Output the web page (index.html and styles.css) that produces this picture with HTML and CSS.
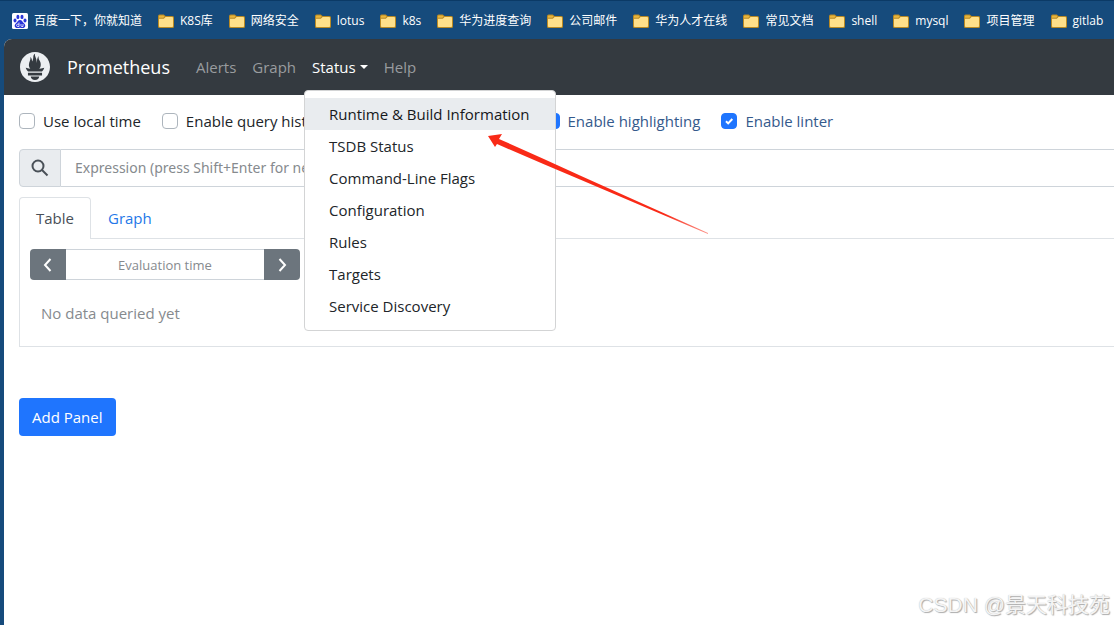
FILE: index.html
```html
<!DOCTYPE html>
<html lang="en">
<head>
<meta charset="utf-8">
<title>Prometheus Time Series Collection and Processing Server</title>
<link rel="stylesheet" href="styles.css">
</head>
<body>
<svg class="defs" aria-hidden="true">
  <symbol id="folder" viewBox="0 0 16 16">
    <path d="M0 3.2Q0 1.5 1.5 1.5h4.3L7.6 3H14.5Q16 3 16 4.500V13.500Q16 15 14.500 15h-13Q0 15 0 13.500z" fill="#b98a24"/>
    <path d="M1 3.300Q1 2.500 1.800 2.500H5.400L6.600 3.600 5.300 4.800H1z" fill="#e8b53c"/>
    <path d="M1 5.800h4.800L7.600 4H14.200Q15 4 15 4.800V13.200Q15 14 14.200 14H1.800Q1 14 1 13.200z" fill="#ffe08a"/>
  </symbol>
</svg>
<nav class="bookmarks" aria-label="Bookmarks" lang="zh">
  <a class="bookmark" href="#"><svg class="bookmark-icon" viewBox="0 0 16 16"><rect width="16" height="16" rx="1.500" fill="#fff"/><g fill="#2b35d8"><ellipse cx="3" cy="7.600" rx="1.500" ry="2"/><ellipse cx="5.900" cy="3.900" rx="1.500" ry="2.200"/><ellipse cx="10" cy="3.900" rx="1.500" ry="2.200"/><ellipse cx="13" cy="7.600" rx="1.500" ry="2"/><path d="M8 7c2 0 2.600 2.200 4.200 3.500 2 1.800 1 4.500-1.300 4.500-1.200 0-1.900-.3-2.900-.3s-1.700.3-2.900.3c-2.300 0-3.300-2.700-1.300-4.500C5.400 9.200 6 7 8 7z"/></g><path d="M7 9.500v4H5.700a1.100 1.100 0 010-2.300H7M9 11v1.800q0 .7.700.7H11V11" fill="none" stroke="#fff" stroke-width=".8"/></svg>百度一下，你就知道</a>
  <a class="bookmark" href="#"><svg class="bookmark-icon"><use href="#folder"/></svg>K8S库</a>
  <a class="bookmark" href="#"><svg class="bookmark-icon"><use href="#folder"/></svg>网络安全</a>
  <a class="bookmark" href="#"><svg class="bookmark-icon"><use href="#folder"/></svg>lotus</a>
  <a class="bookmark" href="#"><svg class="bookmark-icon"><use href="#folder"/></svg>k8s</a>
  <a class="bookmark" href="#"><svg class="bookmark-icon"><use href="#folder"/></svg>华为进度查询</a>
  <a class="bookmark" href="#"><svg class="bookmark-icon"><use href="#folder"/></svg>公司邮件</a>
  <a class="bookmark" href="#"><svg class="bookmark-icon"><use href="#folder"/></svg>华为人才在线</a>
  <a class="bookmark" href="#"><svg class="bookmark-icon"><use href="#folder"/></svg>常见文档</a>
  <a class="bookmark" href="#"><svg class="bookmark-icon"><use href="#folder"/></svg>shell</a>
  <a class="bookmark" href="#"><svg class="bookmark-icon"><use href="#folder"/></svg>mysql</a>
  <a class="bookmark" href="#"><svg class="bookmark-icon"><use href="#folder"/></svg>项目管理</a>
  <a class="bookmark" href="#"><svg class="bookmark-icon"><use href="#folder"/></svg>gitlab</a>
</nav>

<div class="page">
  <header class="navbar">
    <a class="brand" href="#">
      <svg class="logo" viewBox="0 0 24 24"><circle cx="12" cy="12" r="11" fill="#343a40"/><path fill="#eceff2" d="M12 0C5.373 0 0 5.372 0 12c0 6.627 5.373 12 12 12s12-5.373 12-12c0-6.628-5.373-12-12-12zm0 22.460c-1.885 0-3.414-1.260-3.414-2.814h6.828c0 1.553-1.528 2.813-3.414 2.813zm5.640-3.745H6.360v-2.046h11.280v2.046zm-.04-3.098H6.391c-.037-.043-.075-.086-.111-.13-1.155-1.401-1.427-2.133-1.690-2.879-.005-.025 1.400.287 2.395.511 0 0 .513.119 1.262.255-.72-.843-1.147-1.915-1.147-3.010 0-2.406 1.845-4.508 1.180-6.207.648.053 1.340 1.367 1.387 3.422.689-.951.977-2.690.977-3.755 0-1.103.727-2.385 1.454-2.429-.648 1.069.168 1.984.894 4.256.272.854.237 2.290.447 3.201.070-1.892.395-4.652 1.595-5.605-.529 1.200.079 2.702.494 3.424.671 1.164 1.078 2.047 1.078 3.716a4.642 4.642 0 01-1.110 2.996c.792-.149 1.340-.283 1.340-.283l2.573-.502s-.374 1.538-1.810 3.019z"/></svg>
      <span>Prometheus</span>
    </a>
    <nav class="nav-links" aria-label="Main">
      <a class="nav-link" href="#">Alerts</a>
      <a class="nav-link" href="#">Graph</a>
      <div class="dropdown">
        <button class="nav-link active" type="button" aria-expanded="true">Status<span class="caret"></span></button>
        <div class="dropdown-menu">
          <a class="dropdown-item highlighted" href="#">Runtime &amp; Build Information</a>
          <a class="dropdown-item" href="#">TSDB Status</a>
          <a class="dropdown-item" href="#">Command-Line Flags</a>
          <a class="dropdown-item" href="#">Configuration</a>
          <a class="dropdown-item" href="#">Rules</a>
          <a class="dropdown-item" href="#">Targets</a>
          <a class="dropdown-item" href="#">Service Discovery</a>
        </div>
      </div>
      <a class="nav-link" href="#">Help</a>
    </nav>
  </header>

  <main class="content">
    <div class="options">
      <label class="option"><input class="check" type="checkbox">Use local time</label>
      <label class="option"><input class="check" type="checkbox">Enable query history</label>
      <span class="option autocomplete"><input class="check" type="checkbox" aria-label="Enable autocomplete" checked></span>
      <label class="option on"><input class="check" type="checkbox" checked>Enable highlighting</label>
      <label class="option on"><input class="check" type="checkbox" checked>Enable linter</label>
    </div>

    <div class="expression">
      <span class="search"><svg class="search-icon" viewBox="0 0 18 18"><circle cx="7" cy="7" r="5.500"/><path d="M11 11l5.500 5.500"/></svg></span>
      <input class="expression-input" type="text" aria-label="Expression" placeholder="Expression (press Shift+Enter for newlines)">
    </div>

    <div class="tabs" role="tablist">
      <button class="tab selected" type="button" role="tab" aria-selected="true">Table</button>
      <button class="tab" type="button" role="tab" aria-selected="false">Graph</button>
    </div>
    <section class="panel">
      <div class="time-control">
        <button class="step" type="button" aria-label="Earlier"><svg class="chevron" viewBox="0 0 16 16"><path d="M10.500 2L5 8l5.500 6"/></svg></button>
        <input class="time-input" type="text" aria-label="Evaluation time" placeholder="Evaluation time">
        <button class="step last" type="button" aria-label="Later"><svg class="chevron" viewBox="0 0 16 16"><path d="M5.500 2L11 8l-5.500 6"/></svg></button>
      </div>
      <p class="empty">No data queried yet</p>
    </section>

    <button class="add-panel" type="button">Add Panel</button>
  </main>
</div>

<svg class="arrow" viewBox="0 0 220 100" aria-hidden="true">
  <linearGradient id="arrow-fade"><stop offset=".8" stop-color="#f92a17"/><stop offset="1" stop-color="#f92a17" stop-opacity=".5"/></linearGradient>
  <path d="M0 0L14 -2 11 3Q52 21 92 39.500L220 97 220 98 92 43.500Q50 26 9 8L7 11Z" fill="url(#arrow-fade)"/>
</svg>
<div class="watermark" lang="zh">CSDN @景天科技苑</div>
</body>
</html>
```

FILE: styles.css
```css
* { box-sizing: border-box; }

body {
  margin: 0;
  min-height: 100vh;
  display: flex;
  flex-direction: column;
  position: relative;
  overflow: hidden;
  background: #164b7c;
  color: #212529;
  font: 15px/24px "Open Sans", "Noto Sans", "Noto Sans CJK SC", sans-serif;
}

a { color: inherit; text-decoration: none; }
button, input { font: inherit; margin: 0; }
button { cursor: pointer; }
.defs { position: absolute; width: 0; height: 0; }

.bookmarks {
  display: flex;
  gap: 16px;
  height: 39px;
  padding: 2px 12px 0;
  border-top: 1px solid #0b3a66;
  overflow: hidden;
  white-space: nowrap;
  color: #fff;
  font: 12px/16px "Open Sans", "Noto Sans CJK SC", sans-serif;
}
.bookmark { display: flex; flex: none; align-items: center; gap: 6px; }
.bookmark-icon { width: 16px; height: 16px; }

.page {
  flex: 1;
  margin-left: 4px;
  background: #fff;
  border-top-left-radius: 8px;
}

.navbar {
  display: flex;
  align-items: center;
  height: 56px;
  padding: 0 16px;
  background: #343a40;
  border-top-left-radius: 8px;
}
.brand {
  display: flex;
  align-items: center;
  gap: 17px;
  margin-right: 18px;
  color: #fff;
  font-size: 18px;
}
.logo { width: 30px; height: 30px; }
.nav-links { display: flex; }
.nav-link {
  display: flex;
  align-items: center;
  padding: 8px;
  border: 0;
  background: none;
  color: #999c9f;
}
.nav-link.active { color: #fff; }
.caret {
  margin-left: 4px;
  border: 4px solid transparent;
  border-top-color: currentColor;
  border-bottom: 0;
}

.dropdown { position: relative; }
.dropdown-menu {
  position: absolute;
  z-index: 2;
  top: 100%;
  left: 0;
  min-width: 252px;
  margin-top: 3px;
  padding: 7px 0 8px;
  border: 1px solid #d3d4d5;
  border-radius: 4px;
  background: #fff;
}
.dropdown-item {
  display: block;
  padding: 4px 24px;
  white-space: nowrap;
}
.dropdown-item.highlighted { background: #e9ecef; color: #16181b; }

.content { padding: 14px 0 0 15px; }

.options { display: flex; gap: 21px; white-space: nowrap; }
.option { display: flex; align-items: center; gap: 8px; }
.option.on { color: #355a8c; }
.option.autocomplete { width: 172px; }
.check {
  appearance: none;
  width: 16px;
  height: 16px;
  border: 1px solid #adb5bd;
  border-radius: 4px;
  background: #fff;
}
.check:checked {
  border-color: #1f75fe;
  background: #1f75fe url("data:image/svg+xml,%3Csvg xmlns='http://www.w3.org/2000/svg' viewBox='0 0 14 14'%3E%3Cpath d='M4 7.200l2.200 2.200L10.300 5' fill='none' stroke='white' stroke-width='2'/%3E%3C/svg%3E") center / 14px no-repeat;
}

.expression { display: flex; height: 38px; margin-top: 16px; }
.search {
  display: grid;
  place-items: center;
  width: 42px;
  border: 1px solid #ced4da;
  border-radius: 4px 0 0 4px;
  background: #e9ecef;
}
.search-icon, .chevron { fill: none; stroke: currentColor; stroke-width: 2; }
.search-icon { width: 18px; height: 18px; color: #495057; }
.expression-input {
  flex: 1;
  min-width: 0;
  padding: 0 14px;
  border: solid #ced4da;
  border-width: 1px 0;
  background: #fff;
  font-family: "Noto Sans", sans-serif;
  font-size: 14px;
}
::placeholder { color: #868a8e; opacity: 1; }

.tabs {
  display: flex;
  margin-top: 10px;
  border-bottom: 1px solid #dee2e6;
}
.tab {
  height: 42px;
  margin-bottom: -1px;
  padding: 0 16px 2px;
  border: 1px solid transparent;
  border-bottom: 0;
  background: none;
  color: #2478e8;
}
.tab.selected {
  border-color: #dee2e6;
  border-radius: 4px 4px 0 0;
  background: #fff;
  color: #495057;
}

.panel {
  padding: 10px 10px 21px;
  border: solid #dee2e6;
  border-width: 0 0 1px 1px;
}
.time-control { display: flex; width: 270px; height: 31px; }
.step {
  display: grid;
  place-items: center;
  width: 36px;
  padding: 0;
  border: 0;
  border-radius: 4px 0 0 4px;
  background: #6c757d;
  color: #fff;
}
.step.last { border-radius: 0 4px 4px 0; }
.chevron { width: 16px; height: 16px; }
.time-input {
  flex: 1;
  min-width: 0;
  border: solid #ced4da;
  border-width: 1px 0;
  text-align: center;
  font-size: 13px;
}
.empty { margin: 21px 11px 0; color: #868a8e; }

.add-panel {
  height: 38px;
  margin-top: 51px;
  padding: 0 13px;
  border: 0;
  border-radius: 4px;
  background: #1f75fe;
  color: #fff;
}

.arrow {
  position: absolute;
  z-index: 3;
  left: 488px;
  top: 136px;
  width: 220px;
  height: 100px;
  overflow: visible;
  pointer-events: none;
}
.watermark {
  position: absolute;
  right: 4px;
  bottom: 4px;
  color: #f4f4f4;
  font: 21px/32px "Liberation Sans", "Noto Sans CJK SC", sans-serif;
  text-shadow: 1px 1px 1px #aaa, 0 0 1px #bbb;
}
```
